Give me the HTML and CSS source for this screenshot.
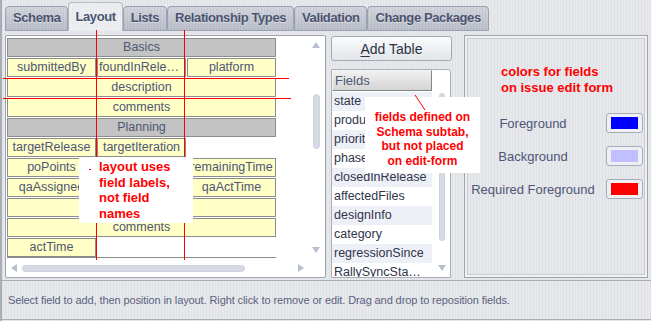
FILE: index.html
```html
<!DOCTYPE html>
<html lang="en">
<head>
    <meta charset="UTF-8">
    <title>Layout</title>
    <link rel="stylesheet" href="styles.css">
</head>
<body>
    <div class="window">
        <div class="tabbar">
            <div class="tab">Schema</div>
            <div class="tab active">Layout</div>
            <div class="tab">Lists</div>
            <div class="tab">Relationship Types</div>
            <div class="tab">Validation</div>
            <div class="tab">Change Packages</div>
        </div>

        <div class="content">
            <div class="layout-panel">
                <div class="layout-top">
                    <div class="layout-view">
                        <div class="grid">
                            <div class="cell head wide">Basics</div>
                            <div class="cell">submittedBy</div>
                            <div class="cell">foundInRelease</div>
                            <div class="cell">platform</div>
                            <div class="cell wide">description</div>
                            <div class="cell wide">comments</div>
                            <div class="cell head wide">Planning</div>
                            <div class="cell">targetRelease</div>
                            <div class="cell">targetIteration</div>
                            <div class="cell blank"></div>
                            <div class="cell">poPoints</div>
                            <div class="cell"></div>
                            <div class="cell">remainingTime</div>
                            <div class="cell">qaAssignee</div>
                            <div class="cell"></div>
                            <div class="cell">qaActTime</div>
                            <div class="cell wide"></div>
                            <div class="cell wide">comments</div>
                            <div class="cell">actTime</div>
                        </div>
                    </div>
                    <div class="vscroll">
                        <svg class="arrow" width="8" height="6" viewBox="0 0 8 6"><path d="M0 6 L4 0 L8 6 Z"/></svg>
                        <div class="vthumb"></div>
                        <svg class="arrow down" width="8" height="6" viewBox="0 0 8 6"><path d="M0 0 L4 6 L8 0 Z"/></svg>
                    </div>
                </div>
                <div class="hscroll">
                    <svg class="arrow" width="6" height="8" viewBox="0 0 6 8"><path d="M6 0 L0 4 L6 8 Z"/></svg>
                    <div class="hthumb"></div>
                    <svg class="arrow right" width="6" height="8" viewBox="0 0 6 8"><path d="M0 0 L6 4 L0 8 Z"/></svg>
                </div>
            </div>

            <div class="middle">
                <button class="add-btn"><u>A</u>dd Table</button>
                <div class="fields">
                    <div class="fields-main">
                        <div class="fields-head">Fields</div>
                        <ul class="field-list">
                            <li>state</li>
                            <li>product</li>
                            <li>priority</li>
                            <li>phase</li>
                            <li>closedInRelease</li>
                            <li>affectedFiles</li>
                            <li>designInfo</li>
                            <li>category</li>
                            <li>regressionSince</li>
                            <li class="long">RallySyncStatus</li>
                        </ul>
                    </div>
                    <div class="fields-scroll">
                        <div class="vthumb small"></div>
                        <svg class="arrow down" width="8" height="6" viewBox="0 0 8 6"><path d="M0 0 L4 6 L8 0 Z"/></svg>
                    </div>
                </div>
            </div>

            <div class="colors-panel">
                <p class="note">colors for fields<br>on issue edit form</p>
                <div class="color-grid">
                    <span class="color-label">Foreground</span>
                    <span class="swatch"><i style="background: #0000ff"></i></span>
                    <span class="color-label">Background</span>
                    <span class="swatch"><i style="background: #c0c0ff"></i></span>
                    <span class="color-label">Required Foreground</span>
                    <span class="swatch"><i style="background: #ff0000"></i></span>
                </div>
            </div>
        </div>

        <div class="status">Select field to add, then position in layout. Right click to remove or edit. Drag and drop to reposition fields.</div>

        <!-- red markup drawn over the screenshot -->
        <div class="mark vline one"></div>
        <div class="mark vline two"></div>
        <div class="mark hline one"></div>
        <div class="mark hline two"></div>
        <div class="callout left-note">layout uses<br>field labels,<br>not field<br>names</div>
        <div class="mark dot"></div>
        <div class="callout mid-note">fields defined on<br>Schema subtab,<br>but not placed<br>on edit-form</div>
        <svg class="pointer" width="14" height="18" viewBox="0 0 14 18"><line x1="1" y1="1" x2="11" y2="16" stroke="#f00" stroke-width="1"/></svg>
    </div>
</body>
</html>
```

FILE: styles.css
```css
body {
    margin: 0;
    font-family: "Liberation Sans", Arial, sans-serif;
}

.window {
    position: relative;
    width: 649px;
    height: 321px;
    border-left: 2px solid #a9adb5;
    background-color: #e6e8ec;
    background-image: repeating-linear-gradient(90deg, rgba(0, 0, 0, 0.03) 0 1px, transparent 1px 3px);
    overflow: hidden;
}

/* tabs */
.tabbar {
    display: flex;
    align-items: flex-end;
    height: 31px;
    padding-left: 3px;
}

.tab {
    height: 23px;
    line-height: 22px;
    padding: 0 7px;
    font-size: 13px;
    font-weight: bold;
    letter-spacing: -0.4px;
    color: #4b5471;
    text-shadow: 0 1px 0 rgba(255, 255, 255, 0.4);
    border: 1px solid #9aa1b0;
    border-radius: 4px 4px 0 0;
    background-color: #c4c8d1;
    background-image: repeating-linear-gradient(90deg, rgba(0, 0, 0, 0.04) 0 1px, transparent 1px 3px),
        linear-gradient(#d2d5dd, #bcc0ca);
}

.tab.active {
    height: 28px;
    line-height: 28px;
    padding: 0 6px;
    border-color: #b4b9c4;
    border-bottom: none;
    background-color: #eceef1;
    background-image: repeating-linear-gradient(90deg, rgba(0, 0, 0, 0.02) 0 1px, transparent 1px 3px);
}

/* main area */
.content {
    display: flex;
    padding: 4px 3px 0 3px;
    height: 243px;
}

.layout-panel {
    box-sizing: border-box;
    width: 321px;
    height: 243px;
    border: 1px solid #a0a4ac;
    border-radius: 2px;
    background: #fff;
    display: flex;
    flex-direction: column;
}

.layout-top {
    flex: 1;
    display: flex;
    min-height: 0;
}

.layout-view {
    flex: 1;
    padding: 2px 0 0 1px;
    overflow: hidden;
}

.grid {
    display: grid;
    grid-template-columns: repeat(3, 89px);
    grid-auto-rows: 19px;
    gap: 1px;
    width: 269px;
    border-bottom: 1px solid #8c8c8c;
}

.cell {
    box-sizing: border-box;
    border: 1px solid #8c8c8c;
    background: #ffffc6;
    padding: 0 1px;
    font-size: 12.5px;
    line-height: 17px;
    text-align: center;
    color: #4e5675;
    white-space: nowrap;
    overflow: hidden;
    text-overflow: ellipsis;
}

.cell.head {
    background: #c3c3c3;
}

.cell.wide {
    grid-column: 1 / -1;
}

.cell.blank {
    border: none;
    background: transparent;
}

.arrow {
    fill: #b7bfcc;
    flex: none;
}

.vscroll {
    width: 18px;
    display: flex;
    flex-direction: column;
    align-items: center;
    padding: 6px 0 6px;
    box-sizing: border-box;
}

.vthumb {
    width: 7px;
    height: 55px;
    margin-top: 46px;
    border-radius: 4px;
    background: #d6dae4;
    border: 1px solid #cdd2dd;
    box-sizing: border-box;
}

.vscroll .down {
    margin-top: auto;
}

.hscroll {
    height: 18px;
    display: flex;
    align-items: center;
    padding: 0 21px 0 5px;
}

.hthumb {
    width: 223px;
    height: 7px;
    margin-left: 5px;
    border-radius: 4px;
    background: #d6dae4;
    border: 1px solid #cdd2dd;
    box-sizing: border-box;
}

.hscroll .right {
    margin-left: auto;
}

/* fields column */
.middle {
    width: 121px;
    margin-left: 5px;
    display: flex;
    flex-direction: column;
}

.add-btn {
    height: 25px;
    margin-top: 1px;
    border: 1px solid #a4a9b4;
    border-radius: 3px;
    background: linear-gradient(#fafbfc, #e3e6ea);
    font-family: "Liberation Sans", Arial, sans-serif;
    font-size: 14px;
    color: #2d3346;
    padding: 0;
}

.add-btn u {
    text-underline-offset: 2px;
}

.fields {
    flex: 1;
    width: 120px;
    margin-top: 8px;
    box-sizing: border-box;
    border: 1px solid #a9adb5;
    border-radius: 0 3px 0 0;
    background: #fff;
    display: flex;
    overflow: hidden;
}

.fields-main {
    width: 100px;
}

.fields-head {
    box-sizing: border-box;
    height: 21px;
    line-height: 19px;
    padding-left: 2px;
    font-size: 13px;
    color: #4e5675;
    border: 1px solid #f4f4f4;
    border-right-color: #858585;
    border-bottom-color: #858585;
    background: linear-gradient(#f1f1f1, #d4d4d4);
}

.field-list {
    list-style: none;
    margin: 1px 0 0;
    padding: 0;
}

.field-list li {
    height: 19px;
    line-height: 19px;
    padding-left: 2px;
    font-size: 12.5px;
    color: #30344a;
    white-space: nowrap;
    overflow: hidden;
    text-overflow: ellipsis;
}

.field-list li.long {
    padding-right: 9px;
}

.field-list li:nth-child(odd) {
    background: #eef0f7;
}

.fields-scroll {
    flex: 1;
    display: flex;
    flex-direction: column;
    align-items: center;
    padding: 23px 0 6px 2px;
}

.vthumb.small {
    width: 6px;
    height: 148px;
    margin-top: 0;
}

.fields-scroll .down {
    margin-top: auto;
}

/* colors panel */
.colors-panel {
    box-sizing: border-box;
    width: 184px;
    height: 243px;
    margin-left: 12px;
    border: 1px solid #9fa3ab;
    box-shadow: inset 0 0 0 2px #f1f2f4, inset 0 0 0 3px #c6cad1;
    padding-top: 28px;
}

.note {
    margin: 0 0 17px 36px;
    font-size: 13px;
    font-weight: bold;
    line-height: 16px;
    color: #f00;
}

.color-grid {
    display: grid;
    grid-template-columns: 136px 37px;
    column-gap: 5px;
    row-gap: 13px;
    align-items: center;
}

.color-label {
    text-align: center;
    font-size: 13px;
    color: #4e5675;
}

.swatch {
    box-sizing: border-box;
    height: 20px;
    padding: 3px 4px;
    border: 1px solid #a5adb9;
    border-radius: 3px;
    background: #eef0f3;
    display: flex;
}

.swatch i {
    flex: 1;
}

/* status line */
.status {
    box-sizing: border-box;
    height: 40px;
    margin-top: 2px;
    border-top: 1px solid #a9adb5;
    border-bottom: 1px solid #a9adb5;
    padding-left: 6px;
    line-height: 38px;
    font-size: 11px;
    letter-spacing: -0.1px;
    color: #5a6380;
}

/* red annotations on top */
.mark {
    position: absolute;
    background: #f00;
}

.vline {
    top: 30px;
    width: 1px;
    height: 230px;
}

.vline.one { left: 94px; }
.vline.two { left: 182px; }

.hline {
    left: 1px;
    height: 1px;
}

.hline.one { top: 78px; width: 286px; }
.hline.two { top: 98px; width: 288px; }

.dot {
    left: 87px;
    top: 169px;
    width: 2px;
    height: 1px;
}

.callout {
    position: absolute;
    box-sizing: border-box;
    background: #fff;
    color: #f00;
    font-weight: bold;
}

.left-note {
    left: 77px;
    top: 157px;
    width: 114px;
    height: 66px;
    padding: 2px 0 0 20px;
    font-size: 13px;
    line-height: 15.5px;
}

.mid-note {
    left: 363px;
    top: 97px;
    width: 115px;
    height: 76px;
    padding-top: 13px;
    font-size: 12px;
    line-height: 14.5px;
    text-align: center;
}

.pointer {
    position: absolute;
    left: 412px;
    top: 94px;
}
```
